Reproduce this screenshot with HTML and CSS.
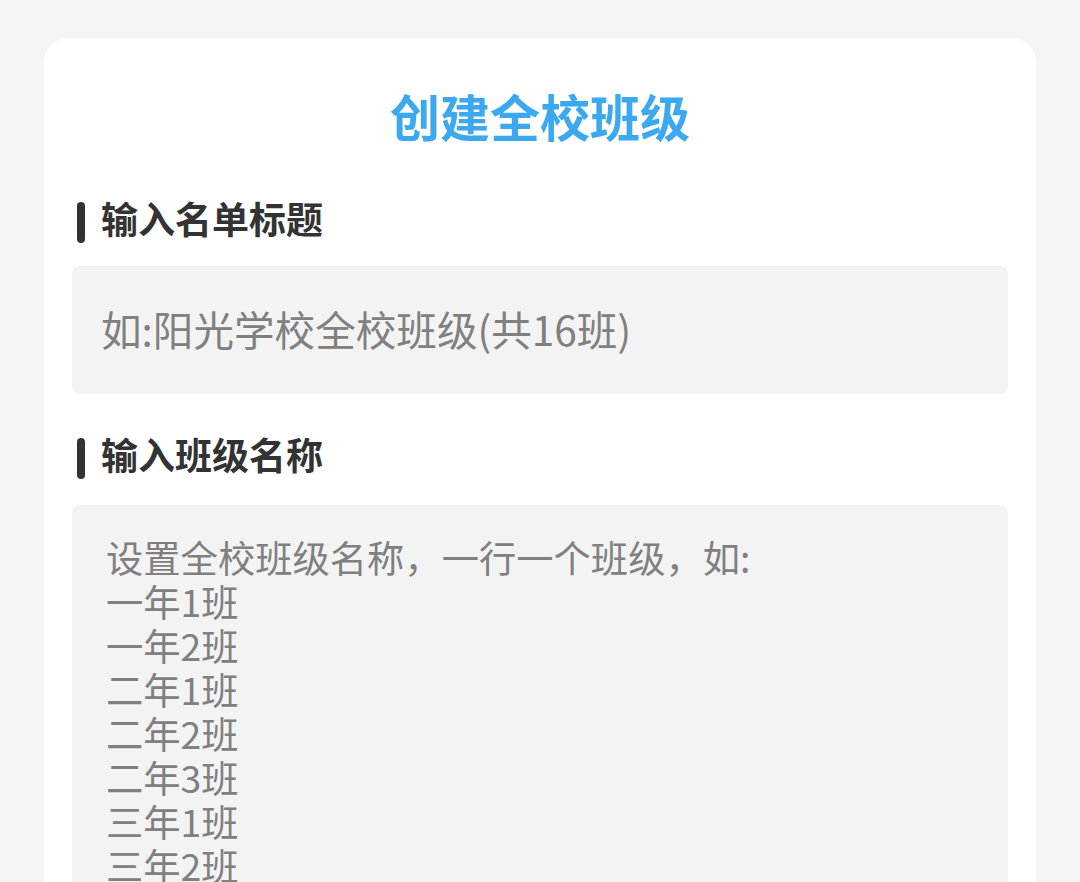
FILE: index.html
```html
<!DOCTYPE html>
<html lang="zh-CN">
<head>
<meta charset="utf-8">
<title>创建全校班级</title>
<link rel="stylesheet" href="styles.css">
</head>
<body>
<div class="page">
  <div class="card">
    <h1 class="title">创建全校班级</h1>
    <div class="section-head"><span class="bar"></span><span class="label">输入名单标题</span></div>
    <input class="field" type="text" placeholder="如:阳光学校全校班级(共16班)">
    <div class="section-head second"><span class="bar"></span><span class="label">输入班级名称</span></div>
    <textarea class="area" placeholder="设置全校班级名称，一行一个班级，如:&#10;一年1班&#10;一年2班&#10;二年1班&#10;二年2班&#10;二年3班&#10;三年1班&#10;三年2班&#10;三年3班&#10;四年1班"></textarea>
  </div>
</div>
</body>
</html>
```

FILE: styles.css
```css
html, body {
  margin: 0;
  padding: 0;
  background: #f4f5f7;
  overflow: hidden;
}
body {
  font-family: "Noto Sans CJK SC", "Noto Sans", sans-serif;
}
.page {
  padding: 38px 44px 0;
  height: 844px;
}
.card {
  background: #ffffff;
  border-radius: 24px 24px 0 0;
  padding: 42px 28px 0;
  height: 100%;
  box-sizing: border-box;
  display: flex;
  flex-direction: column;
}
.title {
  margin: 0;
  text-align: center;
  font-size: 50px;
  line-height: 70px;
  font-weight: 700;
  color: #3ba8ef;
}
.section-head {
  display: flex;
  align-items: center;
  height: 41px;
  margin-top: 52px;
  padding-left: 5px;
}
.section-head.second {
  margin-top: 44px;
}
.bar {
  width: 8px;
  height: 41px;
  border-radius: 4px;
  background: #333333;
  flex: none;
}
.label {
  margin-left: 16px;
  font-size: 37px;
  line-height: 41px;
  padding-bottom: 8px;
  font-weight: 700;
  color: #333333;
}
.field {
  margin-top: 23px;
  height: 128px;
  box-sizing: border-box;
  border: none;
  outline: none;
  border-radius: 8px;
  background: #f3f3f3;
  padding: 0 29px 4px;
  font-family: inherit;
  font-size: 40.6px;
  color: #333;
}
.field::placeholder {
  color: #808080;
}
.area {
  margin-top: 26px;
  flex: 1;
  border: none;
  outline: none;
  resize: none;
  border-radius: 8px 8px 0 0;
  background: #f3f3f3;
  padding: 30px 34px 0;
  font-family: inherit;
  font-size: 37.3px;
  line-height: 44px;
  color: #333;
  overflow: hidden;
}
.area::placeholder {
  color: #808080;
}
```
